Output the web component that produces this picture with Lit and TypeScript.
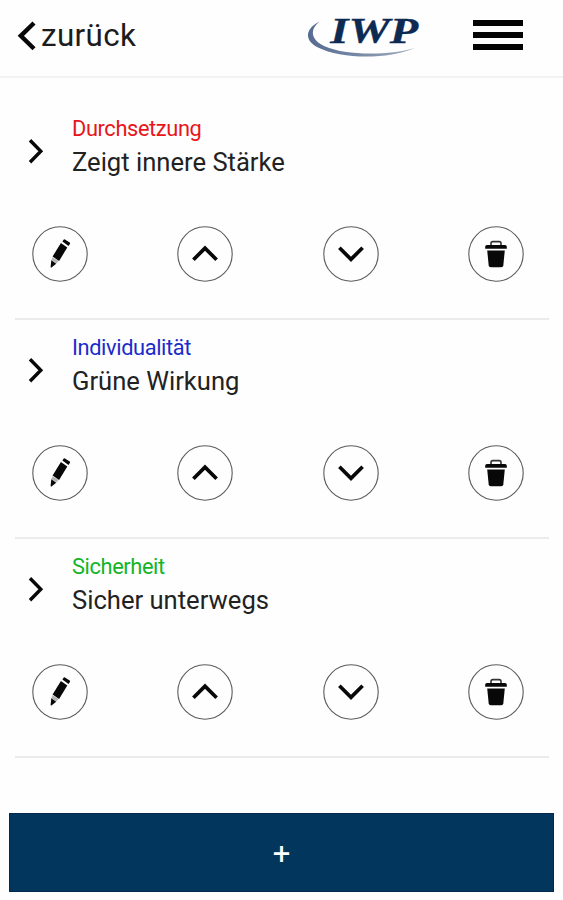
import { LitElement, html, css, svg } from "lit";
import { customElement, property } from "lit/decorators.js";

const pencil = svg`
  <path d="M30.4 15.5l1.4-1.900q.5-.6 1.200-.2l4.700 3.100q.7.500.3 1.200l-1.500 2.300z"/>
  <path d="M28.900 17.100l6.400 4.300-8.200 13.500-6.500-4.400z"/>
  <path d="M19.300 34.300l4.900 3.500-4.700 3.600q-.9.500-.9-.6z"/>
  <path d="M20.500 31.200l-1 3 4.800 3.400 2.300-2.700z" opacity=".3"/>`;
const trash = svg`
  <path d="M23 19.400v-2q0-1.800 1.800-1.800h6.400q1.800 0 1.800 1.800v2" fill="none" stroke="#333" stroke-width="1.600"/>
  <path d="M18.900 18.900h18.200q1.500.2 1.700 1.500v2.300H17.200v-2.300q.2-1.300 1.700-1.500z"/>
  <path d="M19.200 24.400h17.600l-1.500 15q-.2 1.800-2 1.800H22.700q-1.800 0-2-1.800z"/>`;
const up = svg`<path class="line" d="M16.400 33.800L28 22.100l11.600 11.700"/>`;
const down = svg`<path class="line" d="M16.400 21.800L28 33.300l11.600-11.500"/>`;

@customElement("round-button")
class RoundButton extends LitElement {
  @property() label = "";
  @property({ attribute: false }) icon: unknown;

  static styles = css`
    :host { display: block; width: 56px; height: 56px; }
    button { display: block; padding: 0; border: 0; background: none; }
    svg { display: block; fill: #080808; }
    .ring { fill: none; stroke: #5c5c5c; stroke-width: 1.1; }
    .line { fill: none; stroke: #080808; stroke-width: 3.7; }
  `;

  render() {
    return html`<button aria-label=${this.label}>
      <svg width="56" height="56" viewBox="0 0 56 56">
        <circle class="ring" cx="28" cy="28" r="27.2" />
        ${this.icon}
      </svg>
    </button>`;
  }
}

@customElement("value-entry")
class ValueEntry extends LitElement {
  @property() category = "";
  @property() text = "";
  @property() tone = "";

  static styles = css`
    :host {
      display: block;
      box-sizing: border-box;
      height: 219.1px;
      border-bottom: 2px solid #ebebeb;
      margin: 0 14px 0 15px;
    }
    .head { display: flex; align-items: center; height: 100px; }
    .arrow { flex: none; width: 16px; height: 26px; margin-left: 13px; }
    .arrow path { fill: none; stroke: #080808; stroke-width: 3.4; }
    .words { margin-left: 28px; padding-bottom: 8px; white-space: nowrap; }
    .category { font-size: 21.8px; line-height: 30px; letter-spacing: -0.38px; }
    .text { font-size: 25.6px; line-height: 36px; color: #222; }
    .red { color: #e8151b; }
    .blue { color: #1c2bcb; }
    .green { color: #12b526; }
    .actions { display: flex; justify-content: space-between; padding: 25.5px 25px 0 17px; }
  `;

  render() {
    return html`
      <div class="head">
        <svg class="arrow" viewBox="0 0 16 26"><path d="M2 2.2L12.8 13.2 2 24.2" /></svg>
        <div class="words">
          <div class="category ${this.tone}">${this.category}</div>
          <div class="text">${this.text}</div>
        </div>
      </div>
      <div class="actions">
        <round-button label="Bearbeiten" .icon=${pencil}></round-button>
        <round-button label="Nach oben" .icon=${up}></round-button>
        <round-button label="Nach unten" .icon=${down}></round-button>
        <round-button label="Löschen" .icon=${trash}></round-button>
      </div>`;
  }
}

const entries = [
  { category: "Durchsetzung", text: "Zeigt innere Stärke", tone: "red" },
  { category: "Individualität", text: "Grüne Wirkung", tone: "blue" },
  { category: "Sicherheit", text: "Sicher unterwegs", tone: "green" },
];

@customElement("app-root")
class AppRoot extends LitElement {
  static styles = css`
    :host {
      display: flex;
      flex-direction: column;
      box-sizing: border-box;
      height: 900px;
      overflow: hidden;
      background: #fefefe;
      font-family: Roboto, "Liberation Sans", sans-serif;
    }
    header {
      flex: none;
      display: flex;
      box-sizing: border-box;
      height: 78px;
      border-bottom: 2px solid #f3f3f3;
    }
    .back { display: flex; align-items: center; width: 307px; height: 72px; }
    .back svg { margin-left: 17px; }
    .back path { fill: none; stroke: #080808; stroke-width: 4.4; }
    .back span { margin-left: 4px; font-size: 31.4px; line-height: 36px; padding-bottom: 1px; color: #1c1c1c; letter-spacing: 0.35px; }
    .logo { flex: none; margin-top: 10px; }
    .logo text { font: italic bold 35px "Liberation Serif", serif; fill: #0d2a52; stroke: #0d2a52; stroke-width: 0.3; }
    .menu {
      display: flex;
      flex-direction: column;
      gap: 6px;
      width: 50px;
      margin: 20px 0 0 51px;
    }
    .menu i { height: 6px; background: #030303; }
    main { flex: none; padding-top: 22.7px; }
    .add {
      flex: none;
      display: flex;
      align-items: center;
      justify-content: center;
      height: 79px;
      margin: 55px 9px 0;
      padding: 2px 0 0;
      border: 0;
      box-shadow: inset 0 0 0 1px #04284f;
      background: #02365d;
      color: #fff;
      font: 400 31px/1 Roboto, sans-serif;
    }
  `;

  render() {
    return html`
      <header>
        <div class="back">
          <svg width="20" height="30" viewBox="0 0 20 30"><path d="M17 2L3.8 14.8 17 27.8" /></svg>
          <span>zurück</span>
        </div>
        <svg class="logo" width="115" height="50" viewBox="0 0 115 50">
          <defs>
            <linearGradient id="sweep">
              <stop offset="0" stop-color="#566b90" />
              <stop offset=".45" stop-color="#7587a5" />
              <stop offset="1" stop-color="#a4b0bf" />
            </linearGradient>
          </defs>
          <path fill="url(#sweep)" d="M12.5 11.5C-1 18-4 30 11 37.5 34 49 80 50 108 38 80 46 38 45.5 17 36 3 29 3 19 12.5 11.5Z" />
          <text x="23.3" y="33" textLength="88" lengthAdjust="spacingAndGlyphs">IWP</text>
        </svg>
        <div class="menu"><i></i><i></i><i></i></div>
      </header>
      <main>
        ${entries.map(
          (e) => html`<value-entry .category=${e.category} .text=${e.text} .tone=${e.tone}></value-entry>`
        )}
      </main>
      <button class="add" aria-label="Hinzufügen">+</button>`;
  }
}
